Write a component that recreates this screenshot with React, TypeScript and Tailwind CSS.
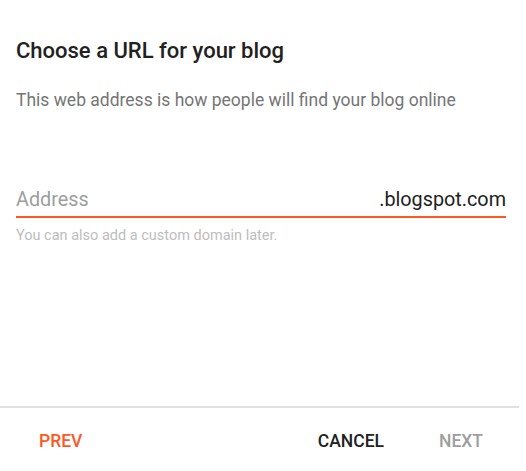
export default function App() {
  return (
    <div className="w-[526px] h-[471px] bg-white flex flex-col" style={{ fontFamily: "Roboto, sans-serif" }}>
      <div className="flex-1 px-4 pt-[36px]">
        <h1 className="text-[22px] leading-[30px] font-medium text-[#212121]">Choose a URL for your blog</h1>
        <p className="mt-[21px] text-[17.5px] leading-[26px] text-[#757575]">This web address is how people will find your blog online</p>
        <div className="mt-[73px] mr-[4px] flex items-end pb-[2px] border-b-2 border-[#ff5722]">
          <span className="flex-1 text-[19.8px] leading-[28px] text-[#9e9e9e]">Address</span>
          <span className="text-[19.8px] leading-[28px] text-[#212121]">.blogspot.com</span>
        </div>
        <p className="mt-[9px] text-[14.5px] leading-[18px] text-[#bdbdbd]">You can also add a custom domain later.</p>
      </div>
      <div className="mr-[7px] h-[2px] bg-[#e0e0e0]" />
      <div className="h-[63px] pt-[3px] flex items-center pl-[39px] pr-[43px] text-[17.5px] font-medium">
        <span className="text-[#ff5722]">PREV</span>
        <span className="ml-auto text-[#212121]">CANCEL</span>
        <span className="ml-[55px] text-[#9e9e9e]">NEXT</span>
      </div>
    </div>
  );
}
